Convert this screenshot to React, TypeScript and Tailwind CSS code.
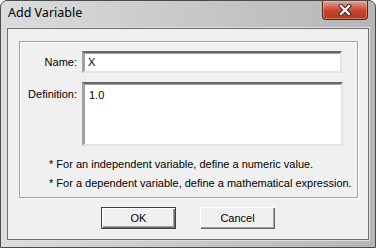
import React from 'react';

const sunken =
  'border-2 border-t-[#696969] border-l-[#a0a0a0] border-r-[#e3e3e3] border-b-[#e3e3e3] bg-white shadow-[inset_1px_1px_0_#a0a0a0]';

function CloseButton() {
  return (
    <div className="absolute right-[7px] top-0 h-[19px] w-[46px] rounded-b-[4px] border border-t-0 border-[#5a2219] bg-gradient-to-b from-[#e3a293] via-[#c9462f] to-[#b8361f] shadow-[inset_0_0_0_1px_rgba(255,200,190,0.45)] flex items-center justify-center">
      <svg width="14" height="12" viewBox="0 0 14 12">
        <path d="M3 2 L11 10 M11 2 L3 10" stroke="#3c2a28" strokeWidth="4.2" strokeLinecap="square" />
        <path d="M3 2 L11 10 M11 2 L3 10" stroke="#ffffff" strokeWidth="2.2" strokeLinecap="square" />
      </svg>
    </div>
  );
}

function WinButton({ label, isDefault }: { label: string; isDefault?: boolean }) {
  return (
    <button
      className={
        'h-[22px] w-[75px] bg-[#f0f0f0] text-[11px] text-black ' +
        (isDefault
          ? 'border border-[#404040] shadow-[inset_1px_1px_0_#ffffff,inset_-1px_-1px_0_#696969,inset_-2px_-2px_0_#a0a0a0]'
          : 'shadow-[inset_1px_1px_0_#ffffff,inset_-1px_-1px_0_#696969,inset_-2px_-2px_0_#a0a0a0]')
      }
    >
      {label}
    </button>
  );
}

export default function App() {
  return (
    <div className="w-[376px] h-[248px] bg-white font-['Liberation_Sans',Arial,sans-serif]">
      <div className="relative w-full h-full rounded-t-[7px] border border-[#4a4a4a] bg-gradient-to-r from-[#dcdcdc] via-[#c8c8c8] to-[#b6b6b6] flex flex-col">
        {/* title bar */}
        <div className="h-[27px] flex items-center pl-[7px] pb-[2px]">
          <span className="text-[12.5px] text-black font-['Noto_Sans',sans-serif] leading-none">Add Variable</span>
        </div>
        <CloseButton />

        {/* client area */}
        <div className="mx-[6px] mb-[7px] flex-1 border border-[#6f6f6f] shadow-[0_0_0_1px_#e0e0e0] bg-[#f0f0f0] flex flex-col items-start">
          <div className="ml-[11px] mt-[12px] w-[339px] h-[157px] border border-[#a0a0a0] shadow-[inset_1px_1px_0_#ffffff,1px_1px_0_#ffffff] flex flex-col text-[11px] text-black">
            <div className="flex items-center mt-[9px]">
              <div className="w-[57px] text-right">Name:</div>
              <div className={'ml-[5px] w-[260px] h-[22px] flex items-center px-[4px] ' + sunken}>X</div>
            </div>
            <div className="flex items-start mt-[9px]">
              <div className="w-[57px] text-right pt-[4px]">Definition:</div>
              <div className={'ml-[5px] w-[261px] h-[64px] px-[5px] pt-[3px] ' + sunken}>1.0</div>
            </div>
            <div className="ml-[29px] mt-[12px] flex flex-col gap-[6px] leading-[13px]">
              <div>* For an independent variable, define a numeric value.</div>
              <div>* For a dependent variable, define a mathematical expression.</div>
            </div>
          </div>
          <div className="mt-[9px] ml-[93px] flex gap-[24px]">
            <WinButton label="OK" isDefault />
            <WinButton label="Cancel" />
          </div>
        </div>
      </div>
    </div>
  );
}
